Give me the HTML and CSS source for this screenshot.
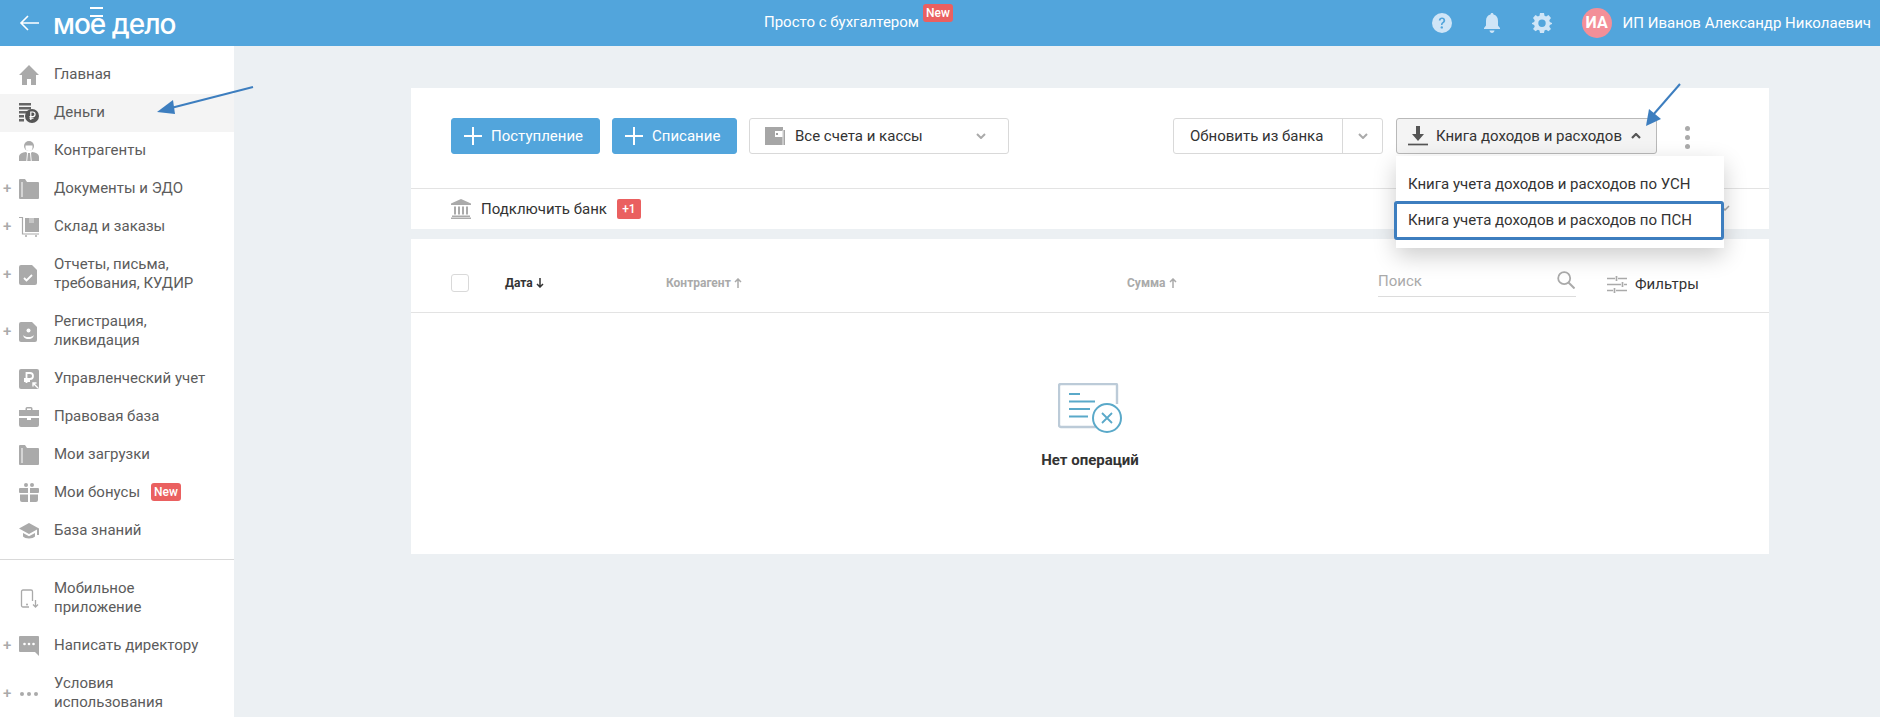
FILE: index.html
```html
<!DOCTYPE html>
<html lang="ru">
<head>
<meta charset="utf-8">
<title>Моё дело</title>
<link rel="stylesheet" href="styles.css">
</head>
<body>
<header class="topbar">
  <div class="brand">
    <svg class="back" viewBox="0 0 20 16"><path d="M9 1 2 8l7 7M2 8h18" fill="none" stroke="#fff" stroke-width="1.6"/></svg>
    <span class="logo">мое дело</span>
  </div>
  <div class="promo"><span>Просто с бухгалтером</span><span class="new new-top">New</span></div>
  <div class="user">
    <svg class="hicon" viewBox="0 0 20 20"><circle cx="10" cy="10" r="10" fill="#cfe5f7"/><path d="M6.800 7.600C6.800 5.700 8.200 4.600 10 4.600c1.900 0 3.200 1.100 3.200 2.800 0 2.500-2.700 2.400-2.700 4.600H9c0-3 2.400-2.900 2.400-4.600 0-.8-.6-1.300-1.400-1.300-.9 0-1.400.6-1.500 1.500z" fill="#52a5dc"/><circle cx="9.800" cy="14.400" r="1.200" fill="#52a5dc"/></svg>
    <svg class="hicon" viewBox="0 0 20 20"><path d="M10 0c1 0 1.500.7 1.500 1.600C14.400 2.300 16 4.700 16 8v4.500l2 2.500v1H2v-1l2-2.500V8c0-3.300 1.600-5.700 4.500-6.400C8.500.7 9 0 10 0zM7.500 17.500h5C12.300 19 11.300 20 10 20s-2.300-1-2.500-2.500z" fill="#cfe5f7"/></svg>
    <svg class="hicon" viewBox="0 0 20 20"><path d="M8 0h4l.5 2.800 1.600.7L16.500 2 19 5l-1.700 2.200.5 1.700L20 10v1l-2.200 1-.5 1.700L19 16l-2.500 2.200-2.400-1.500-1.600.7L12 20H8l-.5-2.600-1.600-.7L3.500 18.200 1 16l1.700-2.300-.5-1.700L0 11v-1l2.200-1.100.5-1.700L1 5l2.500-3 2.400 1.500 1.600-.7zM10 6.500a3.700 3.700 0 1 0 0 7.400 3.700 3.700 0 0 0 0-7.400z" fill="#cfe5f7" fill-rule="evenodd"/></svg>
    <span class="avatar">ИА</span>
    <span class="username">ИП Иванов Александр Николаевич</span>
  </div>
</header>

<div class="layout">
  <nav class="sidebar">
    <a class="item"><svg class="ico" viewBox="0 0 20 20"><path d="M10 0 0 10h3v10h5v-6h4v6h5V10h3z" fill="#aaa"/></svg><span>Главная</span></a>
    <a class="item active"><svg class="ico" viewBox="0 0 20 20"><path d="M0 0h12v2.500H0zM0 4h12v2.500H0zM0 8h8v2.500H0zM0 12h5v2.500H0zM0 16h5v2.500H0z" fill="#666"/><circle cx="13" cy="13" r="7" fill="#555"/><path d="M11.800 17V9h2a2.200 2.200 0 0 1 0 4.500h-3.300M10.500 15.200h4" fill="none" stroke="#fff" stroke-width="1.200"/></svg><span>Деньги</span></a>
    <a class="item"><svg class="ico" viewBox="0 0 20 20"><circle cx="10" cy="5" r="5" fill="#aaa"/><path d="M6.500 4.500h7v2a3.500 3.500 0 0 1-7 0z" fill="#fff"/><path d="M0 20v-4c0-3 3-4.500 7-5l1 1-.7 8zM20 20v-4c0-3-3-4.500-7-5l-1 1 .7 8zM9 12h2l.8 8H8.200z" fill="#aaa"/></svg><span>Контрагенты</span></a>
    <a class="item plus"><svg class="ico" viewBox="0 0 20 20"><path d="M0 1a1 1 0 0 1 1-1h5l2 3h11a1 1 0 0 1 1 1v15a1 1 0 0 1-1 1H1a1 1 0 0 1-1-1z" fill="#aaa"/><path d="M3.500 3h-1v15h1z" fill="#fff"/></svg><span>Документы и ЭДО</span></a>
    <a class="item plus"><svg class="ico" viewBox="0 0 20 20"><path d="M0 .5h3.500V17H20" fill="none" stroke="#aaa" stroke-width="1.200"/><path d="M6 1h14v14H6z" fill="#aaa"/><path d="M10 1h5v5h-5z" fill="#fff" opacity=".35"/><circle cx="7" cy="19" r="1" fill="#aaa"/><circle cx="17" cy="19" r="1" fill="#aaa"/></svg><span>Склад и заказы</span></a>
    <a class="item plus two"><svg class="ico" viewBox="0 0 20 20"><path d="M2 0h11l5 5v13a2 2 0 0 1-2 2H2a2 2 0 0 1-2-2V2a2 2 0 0 1 2-2z" fill="#aaa"/><path d="M5 13l2.500 2.500L13 10" fill="none" stroke="#fff" stroke-width="1.800"/></svg><span>Отчеты, письма,<br>требования, КУДИР</span></a>
    <a class="item plus two"><svg class="ico" viewBox="0 0 20 20"><path d="M2 0h11l5 5v13a2 2 0 0 1-2 2H2a2 2 0 0 1-2-2V2a2 2 0 0 1 2-2z" fill="#aaa"/><circle cx="9.500" cy="8.500" r="2" fill="#fff"/><path d="M4.500 13c.5 1.500 2.500 2 5 2s4.500-.5 5-2c.5 2-1.500 4-5 4s-5.500-2-5-4z" fill="#fff"/></svg><span>Регистрация,<br>ликвидация</span></a>
    <a class="item"><svg class="ico" viewBox="0 0 20 20"><rect width="20" height="20" rx="2" fill="#aaa"/><path d="M7.500 14V4H11a3 3 0 0 1 0 6H5M5 12h6" fill="none" stroke="#fff" stroke-width="1.800"/><path d="M19 19l-5-5M14 17.500V14h3.500" fill="none" stroke="#fff" stroke-width="1.400"/></svg><span>Управленческий учет</span></a>
    <a class="item"><svg class="ico" viewBox="0 0 20 20"><path d="M6.500 3V1.500A1.500 1.500 0 0 1 8 0h4a1.500 1.500 0 0 1 1.500 1.500V3H20v6H0V3zM8 3h4V1.500H8zM0 11h8v2h4v-2h8v7a2 2 0 0 1-2 2H2a2 2 0 0 1-2-2z" fill="#aaa" fill-rule="evenodd"/></svg><span>Правовая база</span></a>
    <a class="item"><svg class="ico" viewBox="0 0 20 20"><path d="M0 1a1 1 0 0 1 1-1h5l2 3h11a1 1 0 0 1 1 1v15a1 1 0 0 1-1 1H1a1 1 0 0 1-1-1z" fill="#aaa"/><path d="M3.500 3h-1v15h1z" fill="#fff"/></svg><span>Мои загрузки</span></a>
    <a class="item"><svg class="ico" viewBox="0 0 20 20"><path d="M1 5h8v5H1a1 1 0 0 1-1-1V6a1 1 0 0 1 1-1zM11 5h8a1 1 0 0 1 1 1v3a1 1 0 0 1-1 1h-8zM1 11.500h8V19H3a2 2 0 0 1-2-2zM11 11.500h8V17a2 2 0 0 1-2 2h-6z" fill="#aaa"/><circle cx="7" cy="2" r="2" fill="#aaa"/><circle cx="13" cy="2" r="2" fill="#aaa"/></svg><span>Мои бонусы</span><span class="new new-side">New</span></a>
    <a class="item"><svg class="ico" viewBox="0 0 20 20"><path d="M10 2 0 7.500 10 13l8-4.400V14h2V7.500z" fill="#aaa"/><path d="M4 12v3.500c2 2.500 10 2.500 12 0V12l-6 3.200z" fill="#aaa"/></svg><span>База знаний</span></a>
    <div class="divider"></div>
    <a class="item two"><svg class="ico" viewBox="0 0 20 20"><path d="M10 18H4a1.500 1.500 0 0 1-1.500-1.500v-14A1.500 1.500 0 0 1 4 1h8a1.500 1.500 0 0 1 1.500 1.500V12" fill="none" stroke="#aaa" stroke-width="1.300"/><path d="M16.500 11v7M14 15.500l2.500 2.500 2.500-2.500" fill="none" stroke="#aaa" stroke-width="1.300"/><circle cx="8" cy="15.500" r="1" fill="#aaa"/></svg><span>Мобильное<br>приложение</span></a>
    <a class="item plus"><svg class="ico" viewBox="0 0 20 20"><path d="M1 0h18a1 1 0 0 1 1 1v19l-4-4H1a1 1 0 0 1-1-1V1a1 1 0 0 1 1-1z" fill="#aaa"/><circle cx="5.500" cy="8" r="1.300" fill="#fff"/><circle cx="10" cy="8" r="1.300" fill="#fff"/><circle cx="14.500" cy="8" r="1.300" fill="#fff"/></svg><span>Написать директору</span></a>
    <a class="item plus two"><svg class="ico" viewBox="0 0 20 20"><circle cx="3" cy="10" r="2" fill="#aaa"/><circle cx="10" cy="10" r="2" fill="#aaa"/><circle cx="17" cy="10" r="2" fill="#aaa"/></svg><span>Условия<br>использования</span></a>
  </nav>

  <main class="main">
    <section class="panel">
      <div class="toolbar">
        <button class="btn primary b1"><svg class="plusi" viewBox="0 0 18 18"><path d="M9 0v18M0 9h18" stroke="#fff" stroke-width="2"/></svg>Поступление</button>
        <button class="btn primary b2"><svg class="plusi" viewBox="0 0 18 18"><path d="M9 0v18M0 9h18" stroke="#fff" stroke-width="2"/></svg>Списание</button>
        <button class="btn select">
          <svg class="wallet" viewBox="0 0 20 18"><path d="M0 0h18v3h2v15H0z" fill="#a6a6a6"/><path d="M10 4h7.500v6H10z" fill="#fff"/><circle cx="12" cy="7" r="1.100" fill="#888"/><path d="M18 3v15" stroke="#fff" stroke-width=".8"/></svg>
          <span class="grow">Все счета и кассы</span>
          <svg class="chev" viewBox="0 0 10 6"><path d="M1 1l4 4 4-4" fill="none" stroke="#aaa" stroke-width="2"/></svg>
        </button>
        <div class="spacer"></div>
        <div class="split">
          <span class="split-main">Обновить из банка</span>
          <span class="split-arrow"><svg class="chev" viewBox="0 0 10 6"><path d="M1 1l4 4 4-4" fill="none" stroke="#aaa" stroke-width="2"/></svg></span>
        </div>
        <div class="book-wrap">
          <button class="btn book">
            <svg class="dl" viewBox="0 0 20 20"><path d="M8 0h4v8h4l-6 7-6-7h4z" fill="#555"/><path d="M0 18.500h20" stroke="#555" stroke-width="1.700"/></svg>
            <span>Книга доходов и расходов</span>
            <svg class="chev up" viewBox="0 0 10 6"><path d="M1 5l4-4 4 4" fill="none" stroke="#555" stroke-width="2.200"/></svg>
          </button>
          <div class="menu">
            <div class="menu-item">Книга учета доходов и расходов по УСН</div>
            <div class="menu-item selected">Книга учета доходов и расходов по ПСН</div>
          </div>
        </div>
        <div class="kebab"><i></i><i></i><i></i></div>
      </div>
      <div class="bankrow">
        <svg class="bank" viewBox="0 0 20 20"><path d="M10 0 0 4.500V6h20V4.500z" fill="#aaa"/><path d="M3 7.500h2v8H3zM7 7.500h2v8H7zM11 7.500h2v8h-2zM15 7.500h2v8h-2z" fill="#aaa"/><path d="M1 16.500h18V18H1zM0 18.500h20V20H0z" fill="#aaa"/></svg>
        <span>Подключить банк</span>
        <span class="count">+1</span>
        <div class="spacer"></div>
        <svg class="chev peek" viewBox="0 0 10 6"><path d="M1 1l4 4 4-4" fill="none" stroke="#aaa" stroke-width="1.500"/></svg>
      </div>
    </section>
    <section class="panel table">
      <div class="thead">
        <span class="check"></span>
        <span class="col c-date">Дата<svg class="sort" viewBox="0 0 8 10"><path d="M4 0v9M1 6l3 3 3-3" fill="none" stroke="currentColor" stroke-width="1.500"/></svg></span>
        <span class="col c-agent">Контрагент<svg class="sort" viewBox="0 0 8 10"><path d="M4 10V1M1 4l3-3 3 3" fill="none" stroke="currentColor" stroke-width="1.500"/></svg></span>
        <span class="col c-sum">Сумма<svg class="sort" viewBox="0 0 8 10"><path d="M4 10V1M1 4l3-3 3 3" fill="none" stroke="currentColor" stroke-width="1.500"/></svg></span>
        <div class="search">
          <span>Поиск</span>
          <svg class="sicon" viewBox="0 0 18 18"><circle cx="7.200" cy="7.200" r="6" fill="none" stroke="#aaa" stroke-width="1.800"/><path d="M11.500 11.500 17.500 17.500" stroke="#aaa" stroke-width="2"/></svg>
        </div>
        <div class="filters">
          <svg class="ficon" viewBox="0 0 20 17"><path d="M0 2.500h8M11 2.500h9M0 8.500h14M17 8.500h3M0 14.500h6M9 14.500h11M9.500 0v5M15.500 6v5M7.500 12v5" stroke="#aaa" stroke-width="1.700" fill="none"/></svg>
          <span>Фильтры</span>
        </div>
      </div>
      <div class="empty">
        <svg class="eicon" viewBox="0 0 64 50"><path d="M38 44H3a2 2 0 0 1-2-2V3a2 2 0 0 1 2-2h55a1 1 0 0 1 1 1v19" fill="none" stroke="#bccbd8" stroke-width="2.400"/><path d="M11 11h11M11 18.500h26M11 26h21M11 33.500h19" stroke="#5aa9c9" stroke-width="1.800"/><circle cx="49" cy="35" r="14" fill="#fff" stroke="#5aa9c9" stroke-width="2"/><path d="M44 30l10 10M54 30 44 40" stroke="#5aa9c9" stroke-width="1.800"/></svg>
        <div class="empty-text">Нет операций</div>
      </div>
    </section>
  </main>
</div>

<svg class="annot a-side" viewBox="0 0 100 30"><path d="M97 2 15 23" stroke="#3d7ebf" stroke-width="2" fill="none"/><path d="M1 27 17 15l2 14z" fill="#3d7ebf"/></svg>
<svg class="annot a-top" viewBox="0 0 40 46"><path d="M37 2 10 33" stroke="#3d7ebf" stroke-width="2" fill="none"/><path d="M3 44 6 27l12 10z" fill="#3d7ebf"/></svg>
</body>
</html>
```
FILE: styles.css
```css
* { box-sizing: border-box; }
html, body { margin: 0; height: 717px; overflow: hidden; }
body { position: relative; background: #ecf0f3; font-family: Roboto, "Liberation Sans", sans-serif; font-size: 15px; color: #333; }
button { font: inherit; cursor: pointer; }

.topbar { height: 46px; background: #52a5dc; color: #fff; display: grid; grid-template-columns: 764px auto 1fr; align-items: center; }
.brand { display: flex; align-items: center; padding-left: 19px; }
.back { width: 20px; height: 16px; }
.logo { margin-left: 14px; font-family: Inter, sans-serif; font-weight: 500; font-size: 28px; line-height: 34px; letter-spacing: -1px; position: relative; top: 1px; }
.logo::before { content: ""; position: absolute; left: 37px; top: 0; width: 13px; height: 6px; border-top: 2px solid #fff; border-bottom: 2px solid #fff; }
.promo { display: flex; align-items: flex-start; height: 46px; padding-top: 4px; }
.promo > span:first-child { margin-top: 9px; line-height: 18px; }
.new { background: #ea6060; color: #fff; border-radius: 3px; font-size: 12px; font-weight: 500; line-height: 18px; height: 18px; width: 30px; text-align: center; display: inline-block; }
.new-top { margin-left: 4px; }
.user { display: flex; align-items: center; justify-content: flex-end; padding-right: 9px; }
.hicon { width: 20px; height: 20px; margin-right: 30px; }
.avatar { width: 30px; height: 30px; border-radius: 50%; background: #f38f98; text-align: center; line-height: 30px; font-weight: 700; font-size: 16px; }
.username { margin-left: 11px; }

.layout { display: grid; grid-template-columns: 234px 1fr; height: 671px; }
.sidebar { background: #fff; padding-top: 10px; overflow: hidden; color: #5c5c5c; }
.item { display: flex; align-items: center; height: 38px; padding-left: 19px; line-height: 19px; position: relative; }
.item > span { margin-top: -2px; }
.item.two { height: 57px; }
.item.active { background: #f4f4f4; }
.item.plus::before { content: "+"; position: absolute; left: 3px; top: calc(50% - 1px); transform: translateY(-50%); color: #aaa; font-size: 15px; font-weight: 500; }
.ico { width: 20px; height: 20px; flex: none; margin-right: 15px; }
.new-side { margin-left: 11px; }
.divider { height: 1px; background: #d9d9d9; margin: 9px 0 10px; }

.main { padding: 42px 0 0 177px; }
.panel { width: 1358px; background: #fff; }
.toolbar { height: 101px; padding: 30px 0 0 40px; display: flex; align-items: flex-start; border-bottom: 1px solid #e3e3e3; }
.spacer { flex: 1; }
.btn { height: 36px; border-radius: 3px; border: 1px solid #d9d9d9; background: #fff; display: flex; align-items: center; padding: 0; color: #333; }
.primary { background: #52a5dc; border-color: #52a5dc; color: #fff; padding-left: 12px; margin-right: 12px; }
.b1 { width: 149px; }
.b2 { width: 125px; margin-right: 12px; }
.plusi { width: 18px; height: 18px; margin-right: 9px; }
.select { width: 260px; padding: 0 22px 0 15px; }
.wallet { width: 20px; height: 18px; margin-right: 10px; }
.grow { flex: 1; text-align: left; }
.chev { width: 10px; height: 6px; display: block; }
.split { width: 210px; height: 36px; display: flex; align-items: center; border: 1px solid #d9d9d9; border-radius: 3px; margin-right: 13px; }
.split-main { width: 169px; padding-left: 16px; border-right: 1px solid #d9d9d9; line-height: 34px; }
.split-arrow { flex: 1; display: flex; justify-content: center; }
.book-wrap { position: relative; margin-right: 28px; }
.book { width: 261px; background: #f4f4f4; border-color: #b9b9b9; padding-left: 11px; }
.dl { width: 20px; height: 20px; margin-right: 8px; }
.up { margin-left: 9px; }
.menu { position: absolute; left: 0; top: 38px; width: 328px; height: 92px; background: #fff; box-shadow: 0 8px 22px rgba(0,0,0,.2); padding-top: 10px; z-index: 5; }
.menu-item { height: 35px; line-height: 36px; padding-left: 12px; white-space: nowrap; }
.menu-item.selected { margin: 0 0 0 -2px; padding-left: 11px; width: 330px; height: 39px; line-height: 33px; border: 3px solid #3d7ebf; border-radius: 3px; }
.kebab { width: 6px; display: flex; flex-direction: column; gap: 4px; padding-top: 8px; margin-right: 78px; }
.kebab i { width: 5px; height: 5px; border-radius: 50%; background: #aaa; display: block; }
.bankrow { height: 40px; padding: 0 39px 1px 40px; display: flex; align-items: center; }
.bank { width: 20px; height: 20px; margin-right: 10px; }
.count { margin-left: 10px; width: 24px; height: 20px; border-radius: 2px; background: #ea6060; color: #fff; font-size: 12px; font-weight: 500; text-align: center; line-height: 20px; }
.peek { margin-top: -2px; }

.table { margin-top: 10px; height: 315px; }
.thead { height: 74px; border-bottom: 1px solid #e3e3e3; display: flex; align-items: flex-start; padding: 35px 0 0 40px; }
.check { width: 18px; height: 18px; border: 1px solid #d9d9d9; border-radius: 3px; flex: none; }
.col { font-size: 12px; font-weight: 700; color: #aaa; line-height: 18px; flex: none; }
.sort { width: 8px; height: 10px; margin-left: 3px; vertical-align: -1px; }
.c-date { margin-left: 36px; width: 161px; color: #333; }
.c-agent { width: 461px; }
.c-sum { width: 251px; }
.search { width: 198px; margin-top: -3px; border-bottom: 1px solid #dcdcdc; display: flex; justify-content: space-between; color: #aaa; line-height: 20px; height: 26px; padding-right: 1px; }
.sicon { width: 18px; height: 18px; }
.filters { display: flex; align-items: center; margin-left: 31px; line-height: 20px; }
.ficon { width: 20px; height: 17px; margin-right: 8px; }
.empty { display: flex; flex-direction: column; align-items: center; padding-top: 70px; }
.eicon { width: 64px; height: 50px; }
.empty-text { font-weight: 700; font-size: 15px; margin-top: 18px; line-height: 18px; }

.annot { position: absolute; overflow: visible; z-index: 9; }
.a-side { left: 156px; top: 85px; width: 100px; height: 30px; }
.a-top { left: 1643px; top: 82px; width: 40px; height: 46px; }
```
